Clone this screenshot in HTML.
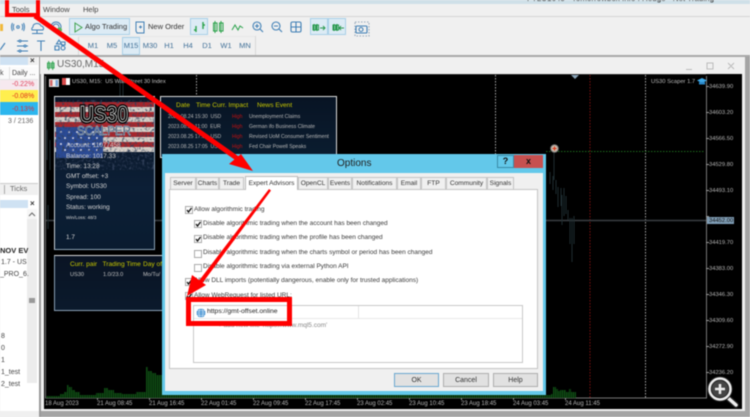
<!DOCTYPE html>
<html><head><meta charset="utf-8">
<style>
html,body{margin:0;padding:0;width:750px;height:417px;overflow:hidden;background:#f0f0f0}
#w{position:absolute;left:0;top:0;width:750px;height:417px;overflow:hidden;filter:blur(.4px);font-family:"Liberation Sans",sans-serif}
#w div,#w span.a{position:absolute;white-space:nowrap}
.t{line-height:10px;height:10px}
.m{font-size:7.5px;color:#444;top:5px}
.tf{font-size:7.5px;color:#3f6f97;top:41px;width:20px;text-align:center}
.p{font-size:5.8px;color:#b4b4b4;left:709px}
.d{font-size:6px;color:#b4b4b4;top:399px}
.c{font-size:6.5px;color:#3a3a3a}
.tab{top:177px;height:12px;background:#f0f0f0;border:1px solid #c4c4c4;border-bottom:none;box-sizing:border-box;font-size:6.6px;color:#333;text-align:center;line-height:12px}
.btn{top:373px;height:14px;background:#e1e1e1;border:1px solid #adadad;box-sizing:border-box;font-size:7px;color:#333;text-align:center;line-height:13px}
.n{font-size:5.1px;color:#b8b8b8}
.h{font-size:6.6px;color:#c8c800}
.s{font-size:6.4px;color:#d4d4d4;left:66px}
.l{font-size:7px;color:#444;left:1px}
</style></head><body><div id="w">

<div style="left:0;top:0;width:750px;height:4px;background:#cfe0e8"></div>
<div class="t" style="left:527px;top:-6px;font-size:8px;color:#333">FTLU1645 - Tomorrowbox Info : Hedge - Net Trading</div>
<div style="left:0;top:4px;width:750px;height:12px;background:#f0f0f0"></div>
<div style="left:0;top:16px;width:750px;height:1px;background:#d4d4d4"></div>
<div style="left:0;top:55px;width:750px;height:2px;background:#a8a8a8"></div>

<div class="m t" style="left:12px">Tools</div>
<div class="m t" style="left:43px">Window</div>
<div class="m t" style="left:83px">Help</div>

<!-- toolbar highlighted buttons -->
<div style="left:69px;top:18px;width:61px;height:17px;background:#dcebf5;border:1px solid #a9d0e8;box-sizing:border-box"></div>
<div class="t" style="left:85px;top:22px;font-size:7.5px;color:#333">Algo Trading</div>
<div class="t" style="left:148px;top:22px;font-size:7.5px;color:#333">New Order</div>
<div style="left:190px;top:18px;width:18px;height:17px;background:#dcebf5;border:1px solid #a9d0e8;box-sizing:border-box"></div>
<div style="left:310px;top:18px;width:18px;height:17px;background:#dcebf5;border:1px solid #a9d0e8;box-sizing:border-box"></div>
<div style="left:328px;top:18px;width:18px;height:17px;background:#dcebf5;border:1px solid #a9d0e8;box-sizing:border-box"></div>
<div style="left:122px;top:37px;width:18px;height:18px;background:#dcebf5;border:1px solid #a9d0e8;box-sizing:border-box"></div>
<div style="left:78px;top:36px;width:1px;height:19px;background:#d8d8d8"></div>
<div style="left:255px;top:36px;width:1px;height:19px;background:#d8d8d8"></div>
<div style="left:78px;top:36px;width:177px;height:1px;background:#e8e8e8"></div>

<div class="tf t" style="left:83px">M1</div><div class="tf t" style="left:102px">M5</div><div class="tf t" style="left:121px">M15</div><div class="tf t" style="left:140px">M30</div><div class="tf t" style="left:159px">H1</div><div class="tf t" style="left:178px">H4</div><div class="tf t" style="left:197px">D1</div><div class="tf t" style="left:216px">W1</div><div class="tf t" style="left:235px">MN</div>

<svg style="position:absolute;left:0;top:17px" width="375" height="39" viewBox="0 17 375 39" fill="none" stroke-width="1">
<path d="M0 24h3v7H0z" fill="#f0b93a"/>
<g stroke="#3f7fb5"><circle cx="18" cy="27" r="1.3"/><path d="M14 24q-1.500 3 0 6M22 24q1.500 3 0 6M12.500 23q-2 4 0 8M23.500 23q2 4 0 8"/>
<path d="M33 27a4 3 0 0 1 8-1a2.500 2.500 0 0 1 2 4h-11a2.500 2.500 0 0 1 1-3zM37 30v3M32 33.500h11"/>
<circle cx="56" cy="27" r="5"/><circle cx="56" cy="27" r="3"/></g>
<circle cx="59.500" cy="30" r="2.500" fill="#5cb85c"/>
<path d="M75 23v9l7-4.500z" stroke="#3fa34d"/>
<path d="M136 22h8v11h-7l-1-2zM139 27h3M140.500 25.500v3" stroke="#3f7fb5"/>
<path d="M196 26v6M194 30h2M203 22v7M203 25h2" stroke="#2aa24a" stroke-width="1.400"/>
<g stroke="#2aa24a"><rect x="213.500" y="23" width="3.500" height="8"/><rect x="219.500" y="23" width="3.500" height="8"/><path d="M215 21v12M221 21v12M232 30l3-5 3 5 2-4 3 2"/>
<path d="M314 24v7M313 25h2.500v5H313zM317 24v7M316 25h2.500v5H316zM320 28h5M323 26l2 2-2 2M334 24v7M333 25h2.500v5H333zM337 24v7M336 25h2.500v5H336zM339 28h5M341 26l-2 2 2 2" stroke="#2a9a50"/></g>
<g stroke="#3f7fb5" stroke-width="1.100"><circle cx="257" cy="26" r="4"/><path d="M260 29l3 3M255 26h4M257 24v4"/>
<circle cx="276" cy="26" r="4"/><path d="M279 29l3 3M274 26h4"/>
<rect x="291" y="22" width="10" height="10" rx="1.500"/><path d="M296 22v10M291 27h10"/>
<path d="M355 22h14v14h-14z" stroke-dasharray="1.500 1.500" stroke="#9ab"/><rect x="356" y="26" width="11" height="7" rx="1"/><circle cx="361" cy="29.500" r="2"/></g>
<g stroke="#3f7fb5" stroke-width="1.100">
<path d="M0 50l5-7"/><path d="M17 41h11M17 46h11M17 51h11"/><circle cx="20" cy="41" r="1" fill="#f0f0f0"/><circle cx="25" cy="46" r="1" fill="#f0f0f0"/><circle cx="20" cy="51" r="1" fill="#f0f0f0"/>
<path d="M37 41h8M41 41v10"/><path d="M59 40l2.500 4h-5zM55 46h4v4h-4z"/><circle cx="63" cy="48" r="2"/><path d="M61 42h4v3h-4"/></g>
</svg>

<!-- left panel -->
<div style="left:0;top:57px;width:39px;height:354px;background:#fff"></div>
<div style="left:0;top:57px;width:28px;height:8px;background:#cfe2f3"></div>
<div style="left:28px;top:57px;width:10px;height:8px;background:#f0f0f0"></div>
<div class="t" style="left:30px;top:56px;font-size:8px;font-weight:bold;color:#333">×</div>
<div style="left:0;top:67px;width:38px;height:13px;background:#fbfbfb;border-bottom:1px solid #e4e4e4;box-sizing:border-box"></div>
<div style="left:9px;top:67px;width:1px;height:13px;background:#e0e0e0"></div>
<div class="t" style="left:0;top:69px;font-size:7px;color:#444">k</div>
<div class="t" style="left:12px;top:69px;font-size:7px;color:#444">Daily ...</div>
<div style="left:0;top:80px;width:38px;height:10px;background:#f6e9ef"></div>
<div style="left:0;top:90px;width:38px;height:12px;background:#ffef4e"></div>
<div style="left:0;top:102px;width:38px;height:13px;background:#2cb6ee"></div>
<div class="t" style="left:12px;top:80px;font-size:7px;color:#e0405a">-0.22%</div>
<div class="t" style="left:12px;top:92px;font-size:7px;color:#e0301a">-0.08%</div>
<div class="t" style="left:12px;top:105px;font-size:7px;color:#d83040">-0.13%</div>
<div class="t" style="left:8px;top:117px;font-size:7px;color:#666">3 / 2136</div>

<div style="left:0;top:183px;width:38px;height:12px;background:#f0f0f0;border-top:1px solid #ccc;box-sizing:border-box"></div>
<div style="left:4px;top:185px;width:1px;height:9px;background:#aaa"></div>
<div class="t" style="left:10px;top:184px;font-size:7.500px;color:#666">Ticks</div>
<div style="left:0;top:200px;width:28px;height:8px;background:#cfe2f3"></div>
<div class="t" style="left:30px;top:199px;font-size:8px;font-weight:bold;color:#333">×</div>
<div style="left:27px;top:209px;width:10px;height:174px;background:#ececec"></div>
<div style="left:27px;top:209px;width:10px;height:10px;background:#f6f6f6"></div>
<svg style="position:absolute;left:28px;top:211px" width="8" height="6"><path d="M1 5l3-3 3 3" fill="none" stroke="#666"/></svg>
<div style="left:29px;top:298px;width:6px;height:5px;background:#999"></div>
<div class="t" style="left:0;top:246px;font-size:7.500px;font-weight:bold;color:#222">NOV EV</div>
<div class="l t" style="top:258px">1.7 - US</div>
<div class="l t" style="top:270px;left:0">_PRO_6.</div>
<div class="l t" style="top:332px">8</div>
<div class="l t" style="top:344px">0</div>
<div class="l t" style="top:356px">1</div>
<div class="l t" style="top:368px">1_test</div>
<div class="l t" style="top:380px">2_test</div>

<!-- chart window -->
<div style="left:39px;top:57px;width:1.500px;height:360px;background:#999"></div>
<div style="left:745px;top:57px;width:5px;height:360px;background:#a4a4a4"></div>
<div style="left:40px;top:57px;width:705px;height:17px;background:#f0f0f0"></div>
<div class="t" style="left:57px;top:60px;font-size:10px;color:#666">US30,M15</div>
<svg style="position:absolute;left:47px;top:61px" width="8" height="9"><g fill="none" stroke="#3aa858"><rect x=".5" y="2" width="2.500" height="5"/><rect x="4.500" y="2" width="2.500" height="5"/><path d="M1.700 0v9M5.700 0v9"/></g></svg>
<svg style="position:absolute;left:686px;top:61px" width="52" height="10"><g fill="none" stroke="#bbb"><path d="M0 8.500h6M21 2h6v6h-6zM42 2l6 6M48 2l-6 6"/></g></svg>

<div style="left:44px;top:74px;width:698px;height:335px;background:#000"></div>
<div style="left:41px;top:409px;width:704px;height:2px;background:#f0f0f0"></div>
<div style="left:41px;top:411px;width:704px;height:6px;background:#a4a4a4"></div>
<div style="left:41px;top:74px;width:3px;height:335px;background:#f0f0f0"></div>
<div style="left:742px;top:74px;width:3px;height:335px;background:#f0f0f0"></div>

<svg style="position:absolute;left:44px;top:74px" width="698" height="335" viewBox="44 74 698 335" fill="none">
<path d="M45.500 76V398H706.500V76" stroke="#777"/>
<path d="M45 74H706" stroke="#555"/>
<g stroke="#aaa" stroke-dasharray="1.500 1.500"><path d="M196.500 75V96M495.500 75V398M645.500 75V398"/></g>
<path d="M590 75V398" stroke="#7a0f0f" stroke-dasharray="1.500 1.500"/>
<path d="M546 151.500H705" stroke="#1c6a1c" stroke-dasharray="1.500 1.500"/>
<path d="M46 220.500H706" stroke="#3a3e42" stroke-width="1.500"/>
<path d="M571 75h8l-4 4z" fill="#8aa4b8"/>
<g stroke="#1e2c30"><path d="M554 150v30M550 172v12M553 176v14M556 180v14M558 187v20M561 188v18M564 188v28M562 195v30M566 196v18M568 210v10M570 218v26M572 218v44M574 216v28M47 130v30M50 140v30M48 205v24M120 75v22M123 80v16"/></g>
<circle cx="554.500" cy="148.500" r="3.800" fill="#c8b8a8" stroke="#777"/><path d="M552.500 148.500h4M554.500 146.500v4" stroke="#e03010"/>
<!-- axis ticks -->
<g stroke="#999"><path d="M706 86.500h3M706 112.500h3M706 138.500h3M706 164.500h3M706 190.500h3M706 216.500h3M706 242.500h3M706 268.500h3M706 294.500h3M706 320.500h3M706 346.500h3M706 372.500h3M97.500 398v2M149.500 398v2M201.500 398v2M253.500 398v2M305.500 398v2M357.500 398v2M409.500 398v2M461.500 398v2M513.500 398v2M565.500 398v2"/></g>
<!-- volumes -->
<path fill="#0f4f14" d="M46 398V396H60V394H64V392H67V385H69V387H72V390H75V392H80V395H96V393H104V388H108V390H114V393H122V394H136V392H146V367H148V371H152V373H156V375H162V398ZM162 398V394H546V398ZM541 398V395H551V394H553V387H556V389H558V391H560V390H566V392H569V389H571V392H576V398Z"/>
<path d="M46 382.500H576" stroke="#000" stroke-width="31" stroke-dasharray="1 1.200" stroke-opacity=".55"/>
</svg>

<div class="p t" style="top:82px">34639.90</div><div class="p t" style="top:108px">34603.20</div><div class="p t" style="top:134px">34566.50</div><div class="p t" style="top:160px">34529.80</div><div class="p t" style="top:186px">34493.10</div>
<div style="left:707px;top:217px;width:27px;height:7px;background:#7f9db5"></div>
<div class="t" style="left:709px;top:215.500px;font-size:5.8px;color:#111">34452.00</div>
<div class="p t" style="top:238px">34419.70</div><div class="p t" style="top:264px">34383.00</div><div class="p t" style="top:290px">34346.30</div><div class="p t" style="top:316px">34309.60</div><div class="p t" style="top:342px">34272.90</div><div class="p t" style="top:368px">34236.20</div>

<div class="d t" style="left:45px">18 Aug 2023</div><div class="d t" style="left:97px">21 Aug 08:45</div><div class="d t" style="left:149px">21 Aug 16:45</div><div class="d t" style="left:201px">22 Aug 01:45</div><div class="d t" style="left:253px">22 Aug 09:45</div><div class="d t" style="left:305px">22 Aug 17:45</div><div class="d t" style="left:357px">23 Aug 02:45</div><div class="d t" style="left:409px">23 Aug 10:45</div><div class="d t" style="left:461px">23 Aug 18:45</div><div class="d t" style="left:513px">24 Aug 03:45</div><div class="d t" style="left:565px">24 Aug 11:45</div>

<div class="t" style="left:72px;top:77px;font-size:5.7px;color:#c0c0c0">US30, M15:&nbsp; US Wall Street 30 Index</div>
<div style="left:49px;top:79px;width:8px;height:6px;background:linear-gradient(90deg,#d56a6a 33%,#eee 33% 66%,#7aa7d8 66%);border:.5px solid #ddd"></div>
<div style="left:62px;top:78px;width:8px;height:7px;background:linear-gradient(90deg,#d84a4a 50%,#fff 50%)"></div>
<div class="t" style="left:651px;top:77px;font-size:5.8px;color:#b8b8b8">US30 Scaper 1.7</div>
<svg style="position:absolute;left:697px;top:78px" width="10" height="8"><path d="M0 2.500L5 0l5 2.500L5 5z" fill="#3fa9e8"/><path d="M2 4v2.500h6V4" fill="#2a87c8"/></svg>

<!-- EA panel -->
<div style="left:54px;top:96px;width:101px;height:154px;background:linear-gradient(#0a1424,#0c1f36 60%,#0a1c30);border:1px solid #8aa0b4;border-top-color:#e8e8e8;border-left-color:#c8d0d8;box-sizing:border-box"></div>
<svg style="position:absolute;left:55px;top:100px" width="99" height="70">
<defs><filter id="g" x="0" y="0" width="100%" height="100%"><feTurbulence type="fractalNoise" baseFrequency=".4" numOctaves="2" seed="4"/><feColorMatrix values="0 0 0 0 .03 0 0 0 0 .05 0 0 0 0 .1 2.200 2.200 0 0 -2.150"/></filter></defs>
<g>
<rect y="2" width="99" height="50" fill="#d6cfc8"/>
<g fill="#a8262c"><rect y="2" width="99" height="5"/><rect y="12" width="99" height="5"/><rect y="22" width="99" height="5"/><rect y="32" width="99" height="5"/><rect y="42" width="99" height="5"/></g>
<rect x="1" y="27" width="47" height="31" fill="#2a4a96"/>
<g fill="#dde"><circle cx="6" cy="32" r="1"/><circle cx="14" cy="32" r="1"/><circle cx="22" cy="32" r="1"/><circle cx="30" cy="32" r="1"/><circle cx="38" cy="32" r="1"/><circle cx="45" cy="32" r="1"/><circle cx="10" cy="38" r="1"/><circle cx="18" cy="38" r="1"/><circle cx="26" cy="38" r="1"/><circle cx="34" cy="38" r="1"/><circle cx="42" cy="38" r="1"/><circle cx="6" cy="44" r="1"/><circle cx="14" cy="44" r="1"/><circle cx="22" cy="44" r="1"/><circle cx="30" cy="44" r="1"/><circle cx="38" cy="44" r="1"/><circle cx="45" cy="44" r="1"/><circle cx="10" cy="50" r="1"/><circle cx="18" cy="50" r="1"/><circle cx="26" cy="50" r="1"/><circle cx="34" cy="50" r="1"/><circle cx="42" cy="50" r="1"/></g>
<rect width="99" height="70" filter="url(#g)"/>
</g>
<text x="49" y="22" text-anchor="middle" textLength="48" lengthAdjust="spacingAndGlyphs" font-family="Liberation Sans" font-weight="bold" font-size="23" fill="#000" stroke="#000" stroke-width="3.500">US30</text>
<text x="49" y="22" text-anchor="middle" textLength="48" lengthAdjust="spacingAndGlyphs" font-family="Liberation Sans" font-weight="bold" font-size="23" fill="#0a0a0a" stroke="#eee" stroke-width=".7">US30</text>
<text x="49" y="35" text-anchor="middle" textLength="54" lengthAdjust="spacingAndGlyphs" font-family="Liberation Sans" font-size="13" fill="#16233c" stroke="#9ab" stroke-width=".7">SCALPER</text>
</svg>
<div class="s t" style="top:141px">Account: 11077458</div>
<div class="s t" style="top:151.500px">Balance: 1017.33</div>
<div class="s t" style="top:162px">Time: 13:28</div>
<div class="s t" style="top:172px">GMT offset: +3</div>
<div class="s t" style="top:182px">Symbol: US30</div>
<div class="s t" style="top:192.500px">Spread: 100</div>
<div class="s t" style="top:203px">Status: working</div>
<div class="s t" style="top:213px;font-size:4.6px">Win/Loss: 48/3</div>
<div class="s t" style="top:233px">1.7</div>

<!-- pair panel -->
<div style="left:54px;top:255px;width:112px;height:56px;background:linear-gradient(#0a1424,#0b1a2c);border:1px solid #8aa0b4;border-top-color:#d8d8d8;box-sizing:border-box"></div>
<div class="h t" style="left:70px;top:260px">Curr. pair</div>
<div class="h t" style="left:102.500px;top:260px">Trading Time</div>
<div class="h t" style="left:143px;top:260px">Day of</div>
<div class="t" style="left:70px;top:270px;font-size:5.6px;color:#c0c0c0">US30</div>
<div class="t" style="left:103px;top:270px;font-size:5.6px;color:#c0c0c0">1.0/23.0</div>
<div class="t" style="left:143px;top:270px;font-size:5.6px;color:#c0c0c0">Mo/Tu/</div>

<!-- news panel -->
<div style="left:160px;top:96px;width:177px;height:62px;background:linear-gradient(#081424,#0b1d30);border:1px solid #ddd;box-sizing:border-box"></div>
<div class="h t" style="left:176px;top:101px">Date</div>
<div class="h t" style="left:196px;top:101px">Time Curr. Impact</div>
<div class="h t" style="left:257px;top:101px">News Event</div>
<div class="n t" style="left:168px;top:111.500px">2023.08.24 15:30&nbsp; USD</div><div class="n t" style="left:232px;top:111.500px;color:#c01010">High</div><div class="n t" style="left:249px;top:111.500px">Unemployment Claims</div>
<div class="n t" style="left:168px;top:121.500px">2023.08.25 11:00&nbsp; EUR</div><div class="n t" style="left:232px;top:121.500px;color:#c01010">High</div><div class="n t" style="left:249px;top:121.500px">German ifo Business Climate</div>
<div class="n t" style="left:168px;top:131.500px">2023.08.25 17:00&nbsp; USD</div><div class="n t" style="left:232px;top:131.500px;color:#c01010">High</div><div class="n t" style="left:249px;top:131.500px">Revised UoM Consumer Sentiment</div>
<div class="n t" style="left:168px;top:141.500px">2023.08.25 17:05&nbsp; USD</div><div class="n t" style="left:232px;top:141.500px;color:#c01010">High</div><div class="n t" style="left:249px;top:141.500px">Fed Chair Powell Speaks</div>

<!-- dialog -->
<div style="left:162px;top:154px;width:384px;height:241px;background:#63c8ea"></div>
<div class="t" style="left:337px;top:159px;font-size:10px;color:#222">Options</div>
<div style="left:497px;top:155px;width:17px;height:13px;background:#63c8ea;border:1px solid #3a8aa8;box-sizing:border-box;font-size:9px;font-weight:bold;color:#111;text-align:center;line-height:11px">?</div>
<div style="left:514px;top:155px;width:29px;height:13px;background:#c75050;font-size:9px;font-weight:bold;color:#111;text-align:center;line-height:12px">x</div>
<div style="left:165px;top:173px;width:378px;height:218px;background:#f0f0f0"></div>
<div style="left:169px;top:189px;width:369px;height:180px;background:#fff;border:1px solid #c4c4c4;box-sizing:border-box"></div>

<div class="tab" style="left:170px;width:26px">Server</div>
<div class="tab" style="left:196px;width:23px">Charts</div>
<div class="tab" style="left:219px;width:25px">Trade</div>
<div class="tab" style="left:245px;width:53px;top:176px;height:14px;background:#fff;border-color:#bbb;z-index:2;line-height:13px">Expert Advisors</div>
<div class="tab" style="left:298px;width:30px">OpenCL</div>
<div class="tab" style="left:328px;width:24px">Events</div>
<div class="tab" style="left:352px;width:45px">Notifications</div>
<div class="tab" style="left:397px;width:24px">Email</div>
<div class="tab" style="left:421px;width:25px">FTP</div>
<div class="tab" style="left:446px;width:41px">Community</div>
<div class="tab" style="left:487px;width:27px">Signals</div>

<!-- checkboxes -->
<svg style="position:absolute;left:180px;top:200px;z-index:3" width="30" height="105" fill="none">
<g stroke="#aaa" fill="#fff"><rect x="5.500" y="6.500" width="7" height="7"/><rect x="14.500" y="20.500" width="7" height="7"/><rect x="14.500" y="35.500" width="7" height="7"/><rect x="14.500" y="50.500" width="7" height="7"/><rect x="14.500" y="64.500" width="7" height="7"/><rect x="5.500" y="78.500" width="7" height="7"/><rect x="5.500" y="92.500" width="7" height="7"/></g>
<g stroke="#111" stroke-width="1.300"><path d="M7 10l1.500 2 3-4M16 24l1.500 2 3-4M16 39l1.500 2 3-4M7 82l1.500 2 3-4M7 96l1.500 2 3-4"/></g>
</svg>
<div class="c t" style="left:194px;top:204.500px">Allow algorithmic trading</div>
<div class="c t" style="left:203px;top:218.500px">Disable algorithmic trading when the account has been changed</div>
<div class="c t" style="left:203px;top:233px">Disable algorithmic trading when the profile has been changed</div>
<div class="c t" style="left:203px;top:248px">Disable algorithmic trading when the charts symbol or period has been changed</div>
<div class="c t" style="left:203px;top:262px">Disable algorithmic trading via external Python API</div>
<div class="c t" style="left:194px;top:276px">Allow DLL imports (potentially dangerous, enable only for trusted applications)</div>
<div class="c t" style="left:194px;top:291px">Allow WebRequest for listed URL:</div>

<!-- list -->
<div style="left:193px;top:305px;width:330px;height:58px;background:#fff;border:1px solid #c8c8c8;box-sizing:border-box"></div>
<div style="left:194px;top:318px;width:328px;height:1px;background:#e8e8e8"></div>
<div style="left:358px;top:306px;width:1px;height:12px;background:#e4e4e4"></div>
<svg style="position:absolute;left:195.500px;top:307.500px" width="10" height="10" fill="none"><circle cx="5" cy="5" r="4.500" fill="#3f8fd0"/><g stroke="#dcecf8" stroke-width=".6"><path d="M.5 5h9M1.200 2.800h7.600M1.200 7.200h7.600"/><ellipse cx="5" cy="5" rx="2" ry="4.500"/></g></svg>
<div class="c t" style="left:207px;top:307px;color:#222;font-size:6.8px">https://gmt-offset.online</div>
<div class="c t" style="left:218px;top:320.500px;color:#888">+ add new like 'https://www.mql5.com'</div>

<div class="btn" style="left:394px;width:45px;border-color:#6aa7cf">OK</div>
<div class="btn" style="left:443px;width:46px">Cancel</div>
<div class="btn" style="left:493px;width:45px">Help</div>

<!-- magnifier -->
<svg style="position:absolute;left:705px;top:375px;z-index:8" width="36" height="34" fill="none">
<path d="M22 22l9 8" stroke="#222" stroke-width="6" stroke-linecap="round"/><path d="M22 22l9 8" stroke="#eee" stroke-width="3.500" stroke-linecap="round"/>
<circle cx="15" cy="14" r="10.500" stroke="#222" stroke-width="4.500" fill="#444"/><circle cx="15" cy="14" r="10.500" stroke="#eee" stroke-width="2.500"/>
<path d="M10 14h10M15 9v10" stroke="#eee" stroke-width="2.500"/>
</svg>

<!-- red annotations -->
<svg style="position:absolute;left:0;top:0;z-index:9" width="750" height="417" fill="none">
<rect x="7" y="-3" width="31" height="18" stroke="#f00" stroke-width="4"/>
<path d="M35 16L238 159" stroke="#f00" stroke-width="5"/>
<path d="M253 171L229 164L241 154Z" fill="#f00"/>
<path d="M271 190.500L269 189L198 282L201 285Z" fill="#f00"/>
<path d="M187 296L192 275L206 285Z" fill="#f00"/>
<rect x="188.500" y="299.500" width="101" height="24" stroke="#f00" stroke-width="5"/>
</svg>

</div></body></html>
